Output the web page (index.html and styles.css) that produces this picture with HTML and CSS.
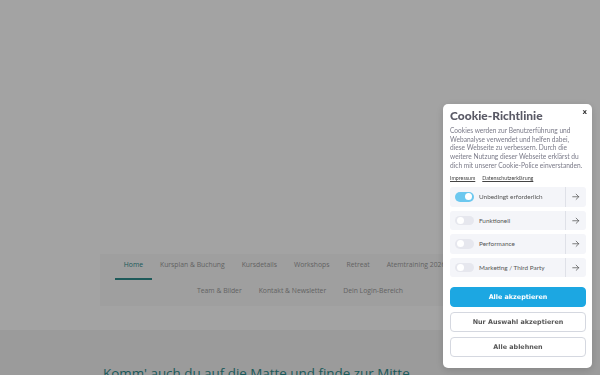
FILE: index.html
```html
<!DOCTYPE html>
<html lang="de">
<head>
  <meta charset="UTF-8">
  <meta name="viewport" content="width=device-width,initial-scale=1.0">
  <title>Yoga – Komm' auf die Matte</title>
  <link rel="stylesheet" href="styles.css">
</head>
<body>
 <!-- Hero (empty image area) -->
 <header class="hero"></header>

 <!-- Main navigation -->
 <nav class="mainnav">
   <a class="active" href="#">Home</a>
   <a href="#">Kursplan &amp; Buchung</a>
   <a href="#">Kursdetails</a>
   <a href="#">Workshops</a>
   <a href="#">Retreat</a>
   <a href="#">Atemtraining 2026</a>
   <a href="#">Blog</a>
   <a href="#">Team &amp; Bilder</a>
   <a href="#">Kontakt &amp; Newsletter</a>
   <a href="#">Dein Login-Bereich</a>
 </nav>

 <section class="intro">
   <h2>Komm' auch du auf die Matte und finde zur Mitte</h2>
 </section>

 <!-- Cookie banner -->
 <div class="overlay"></div>
 <div class="cookie">
   <button class="close" title="Schließen">x</button>
   <h1>Cookie-Richtlinie</h1>
   <p class="text">Cookies werden zur Benutzerführung und<br>Webanalyse verwendet und helfen dabei,<br>diese Webseite zu verbessern. Durch die<br>weitere Nutzung dieser Webseite erklärst du<br>dich mit unserer Cookie-Police einverstanden.</p>
   <div class="links"><a href="#">Impressum</a><a href="#">Datenschutzerklärung</a></div>

   <div class="cats">
     <div class="cat">
       <span class="switch on"></span>
       <span class="label">Unbedingt erforderlich</span>
       <span class="more"><svg viewBox="0 0 10 10"><path d="M1 5h8M5.5 1.5 9 5 5.5 8.5" stroke="currentColor" stroke-width="1" fill="none" stroke-linecap="round" stroke-linejoin="round"/></svg></span>
     </div>
     <div class="cat">
       <span class="switch"></span>
       <span class="label">Funktionell</span>
       <span class="more"><svg viewBox="0 0 10 10"><path d="M1 5h8M5.5 1.5 9 5 5.5 8.5" stroke="currentColor" stroke-width="1" fill="none" stroke-linecap="round" stroke-linejoin="round"/></svg></span>
     </div>
     <div class="cat">
       <span class="switch"></span>
       <span class="label">Performance</span>
       <span class="more"><svg viewBox="0 0 10 10"><path d="M1 5h8M5.5 1.5 9 5 5.5 8.5" stroke="currentColor" stroke-width="1" fill="none" stroke-linecap="round" stroke-linejoin="round"/></svg></span>
     </div>
     <div class="cat">
       <span class="switch"></span>
       <span class="label">Marketing / Third Party</span>
       <span class="more"><svg viewBox="0 0 10 10"><path d="M1 5h8M5.5 1.5 9 5 5.5 8.5" stroke="currentColor" stroke-width="1" fill="none" stroke-linecap="round" stroke-linejoin="round"/></svg></span>
     </div>
   </div>

   <div class="actions">
     <button class="btn primary">Alle akzeptieren</button>
     <button class="btn">Nur Auswahl akzeptieren</button>
     <button class="btn">Alle ablehnen</button>
   </div>
 </div>
</body>
</html>
```

FILE: styles.css
```css
:root{--teal:#2f8e8e;--navtxt:#9a9a9a;--blue:#1ca7e2;--toggle:#6cc8ef;--row:#f4f5f9;--line:#dfe1e8;--dark:#5a5a66;--muted:#7a7a88}
*{box-sizing:border-box;margin:0;padding:0}
body{font-family:'Open Sans',sans-serif;background:#fff;height:375px;overflow:hidden}

.hero{height:254px}

.mainnav{width:400px;margin:0 auto;background:#f9f9f9;display:flex;flex-wrap:wrap;justify-content:center}
.mainnav a{display:block;padding:6px 8.5px 8px;border-bottom:2px solid transparent;font-size:6.8px;line-height:10px;color:var(--navtxt);text-decoration:none}
.mainnav a.active{color:var(--teal);border-bottom-color:var(--teal)}

.intro{margin-top:24px;background:#f2f2f2;padding:34px 103px 40px}
.intro h2{font-size:13.4px;line-height:18px;font-weight:400;color:var(--teal);white-space:nowrap}

.overlay{position:fixed;inset:0;background:rgba(0,0,0,.36)}

.cookie{position:fixed;left:443px;top:104px;width:149px;background:#fff;border-radius:5px;padding:4px 6px 11px 7px;font-family:'Lato',sans-serif;box-shadow:0 2px 8px rgba(0,0,0,.15)}
.cookie h1{font-size:12px;line-height:16px;font-weight:900;color:var(--dark);margin-bottom:2px}
.close{position:absolute;top:4px;right:5px;border:none;background:none;font-family:'DejaVu Sans',sans-serif;font-size:7px;font-weight:700;color:#333;cursor:pointer}
.text{font-size:6.6px;line-height:8.7px;color:var(--muted);white-space:nowrap}
.links{display:flex;gap:7px;margin-top:4px;font-size:5.3px;line-height:8px}
.links a{color:#444;text-decoration:underline}

.cats{display:flex;flex-direction:column;gap:4px;margin-top:5.5px}
.cat{display:flex;align-items:center;height:19.5px;background:var(--row);border-radius:3px}
.switch{position:relative;width:18.5px;height:9.5px;margin-left:5px;border-radius:5px;background:#e6e7ee}
.switch::after{content:"";position:absolute;top:1.25px;left:1.5px;width:7px;height:7px;border-radius:50%;background:#fff}
.switch.on{background:var(--toggle)}
.switch.on::after{left:auto;right:1.5px}
.label{flex:1;margin-left:5.5px;font-size:6.4px;color:#555}
.more{display:flex;align-items:center;justify-content:center;width:21px;height:100%;border-left:1px solid var(--line);color:#555}
.more svg{width:7.5px;height:7.5px}

.actions{display:flex;flex-direction:column;gap:5.5px;margin-top:10px}
.btn{height:19.5px;border:1px solid #d5d8e0;border-radius:4px;background:#fff;font-family:'DejaVu Sans',sans-serif;font-size:6.4px;font-weight:700;color:#555;cursor:pointer}
.btn.primary{background:var(--blue);border-color:var(--blue);color:#fff}
```
